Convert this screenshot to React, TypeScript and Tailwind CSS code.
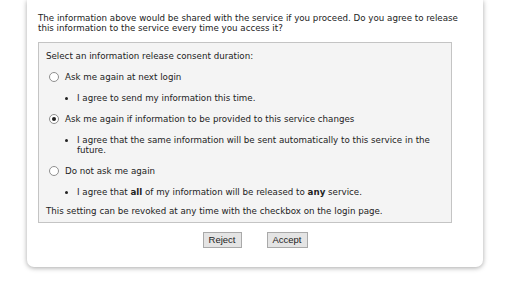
import React from 'react';

const Radio = ({ checked }: { checked?: boolean }) => (
    <span className="w-[10px] h-[10px] rounded-full border border-[#8f8f8f] bg-white flex items-center justify-center shrink-0">
        {checked && <span className="w-[4px] h-[4px] rounded-full bg-[#222]" />}
    </span>
);

const Option = ({ label, checked, children }: { label: string; checked?: boolean; children: React.ReactNode }) => (
    <div className="mt-[11px]">
        <div className="flex items-center gap-[6px] pl-[3px] h-[10px]">
            <Radio checked={checked} />
            <span>{label}</span>
        </div>
        <ul className="mt-[11px] pl-[31px] list-disc pr-[6px]">
            <li>{children}</li>
        </ul>
    </div>
);

const App: React.FC = () => {
    return (
        <div
            className="w-[525px] h-[282px] bg-white overflow-hidden text-[8.7px] leading-[10px] text-[#222]"
            style={{ fontFamily: '"DejaVu Sans", Verdana, sans-serif' }}
        >
            <div className="ml-[27px] w-[456px] bg-white rounded-b-[7px] shadow-[0_1px_5px_rgba(0,0,0,0.35)] px-[11px] pt-[13px] pb-[19px]">
                <p className="pr-[8px]">
                    The information above would be shared with the service if you proceed. Do you agree to release this information to the service every time you access it?
                </p>

                <div className="mt-[9px] w-[414px] bg-[#f4f4f4] border border-[#c4c4c4] px-[7px] pt-[8px] pb-[6px]">
                    <p>Select an information release consent duration:</p>

                    <Option label="Ask me again at next login">I agree to send my information this time.</Option>
                    <Option label="Ask me again if information to be provided to this service changes" checked>
                        I agree that the same information will be sent automatically to this service in the future.
                    </Option>
                    <Option label="Do not ask me again">
                        I agree that <b>all</b> of my information will be released to <b>any</b> service.
                    </Option>

                    <p className="mt-[9px]">This setting can be revoked at any time with the checkbox on the login page.</p>
                </div>

                <div className="mt-[9px] flex justify-center gap-[25px]" style={{ fontFamily: '"Liberation Sans", Arial, sans-serif' }}>
                    <button className="h-[16px] px-[4px] w-[39px] text-[9.5px] text-[#222] bg-[#e4e4e4] border border-[#a9a9a9]">Reject</button>
                    <button className="h-[16px] px-[4px] w-[41px] text-[9.5px] text-[#222] bg-[#e4e4e4] border border-[#a9a9a9]">Accept</button>
                </div>
            </div>
        </div>
    );
};

export default App;
